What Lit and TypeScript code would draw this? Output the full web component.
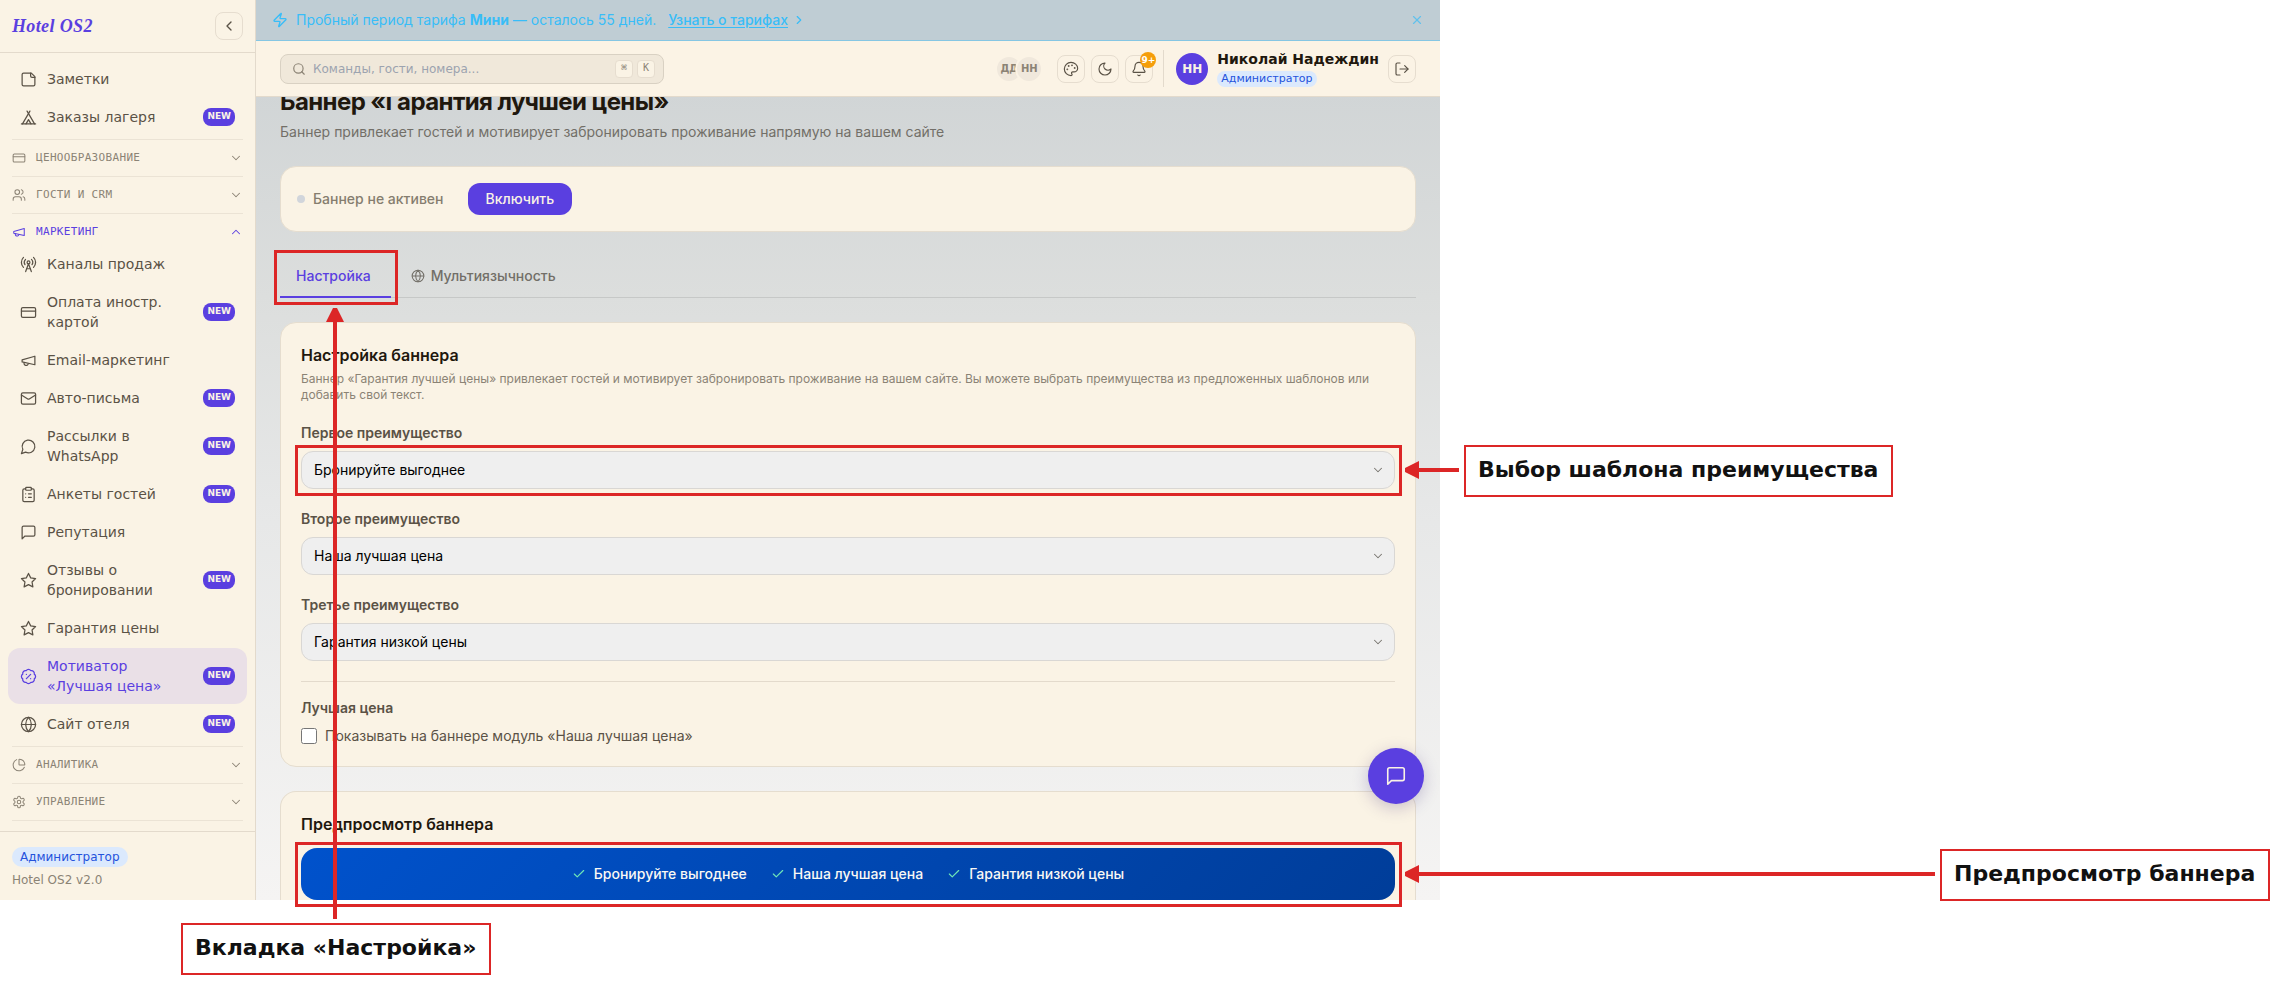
import { LitElement, html, css, svg, nothing } from "lit";
import { customElement, property } from "lit/decorators.js";
import { classMap } from "lit/directives/class-map.js";

const ICONS: Record<string, unknown> = {
  note: svg`<path d="M16 3H5a2 2 0 0 0-2 2v14a2 2 0 0 0 2 2h14a2 2 0 0 0 2-2V8Z"/><path d="M15 3v4a2 2 0 0 0 2 2h4"/>`,
  tent: svg`<path d="M3.5 21 14 3"/><path d="M20.5 21 10 3"/><path d="M15.5 21 12 15l-3.5 6"/><path d="M2 21h20"/>`,
  card: svg`<rect width="20" height="14" x="2" y="5" rx="2"/><path d="M2 10h20"/>`,
  users: svg`<path d="M16 21v-2a4 4 0 0 0-4-4H6a4 4 0 0 0-4 4v2"/><circle cx="9" cy="7" r="4"/><path d="M22 21v-2a4 4 0 0 0-3-3.87"/><path d="M16 3.13a4 4 0 0 1 0 7.75"/>`,
  megaphone: svg`<path d="m3 11 18-5v12L3 14v-3z"/><path d="M11.6 16.8a3 3 0 1 1-5.8-1.6"/>`,
  tower: svg`<path d="M4.9 16.1C1 12.2 1 5.8 4.9 1.9"/><path d="M7.8 4.7a6.14 6.14 0 0 0-.8 7.5"/><circle cx="12" cy="9" r="2"/><path d="M16.2 4.8c2 2 2.26 5.11.8 7.47"/><path d="M19.1 1.9a9.96 9.96 0 0 1 0 14.1"/><path d="M9.5 18h5"/><path d="m8 22 4-11 4 11"/>`,
  mail: svg`<rect width="20" height="16" x="2" y="4" rx="2"/><path d="m22 7-8.97 5.7a1.94 1.94 0 0 1-2.06 0L2 7"/>`,
  bubble: svg`<path d="M7.9 20A9 9 0 1 0 4 16.1L2 22Z"/>`,
  clipboard: svg`<rect width="8" height="4" x="8" y="2" rx="1"/><path d="M16 4h2a2 2 0 0 1 2 2v14a2 2 0 0 1-2 2H6a2 2 0 0 1-2-2V6a2 2 0 0 1 2-2h2"/><path d="M12 11h4"/><path d="M12 16h4"/><path d="M8 11h.01"/><path d="M8 16h.01"/>`,
  message: svg`<path d="M21 15a2 2 0 0 1-2 2H7l-4 4V5a2 2 0 0 1 2-2h14a2 2 0 0 1 2 2z"/>`,
  star: svg`<path d="M12 2l3.09 6.26L22 9.27l-5 4.87 1.18 6.88L12 17.77l-6.18 3.25L7 14.14 2 9.27l6.91-1.01L12 2z"/>`,
  percent: svg`<path d="M3.85 8.62a4 4 0 0 1 4.78-4.77 4 4 0 0 1 6.74 0 4 4 0 0 1 4.78 4.78 4 4 0 0 1 0 6.74 4 4 0 0 1-4.77 4.78 4 4 0 0 1-6.75 0 4 4 0 0 1-4.78-4.77 4 4 0 0 1 0-6.76Z"/><path d="m15 9-6 6"/><path d="M9 9h.01"/><path d="M15 15h.01"/>`,
  globe: svg`<circle cx="12" cy="12" r="10"/><path d="M12 2a14.5 14.5 0 0 0 0 20 14.5 14.5 0 0 0 0-20"/><path d="M2 12h20"/>`,
  pie: svg`<path d="M21 12c.552 0 1.005-.449.95-.998a10 10 0 0 0-8.953-8.951c-.55-.055-.998.398-.998.95v8a1 1 0 0 0 1 1z"/><path d="M21.21 15.89A10 10 0 1 1 8 2.83"/>`,
  gear: svg`<path d="M12.22 2h-.44a2 2 0 0 0-2 2v.18a2 2 0 0 1-1 1.73l-.43.25a2 2 0 0 1-2 0l-.15-.08a2 2 0 0 0-2.73.73l-.22.38a2 2 0 0 0 .73 2.73l.15.1a2 2 0 0 1 1 1.72v.51a2 2 0 0 1-1 1.74l-.15.09a2 2 0 0 0-.73 2.73l.22.38a2 2 0 0 0 2.73.73l.15-.08a2 2 0 0 1 2 0l.43.25a2 2 0 0 1 1 1.73V20a2 2 0 0 0 2 2h.44a2 2 0 0 0 2-2v-.18a2 2 0 0 1 1-1.73l.43-.25a2 2 0 0 1 2 0l.15.08a2 2 0 0 0 2.73-.73l.22-.39a2 2 0 0 0-.73-2.73l-.15-.08a2 2 0 0 1-1-1.74v-.5a2 2 0 0 1 1-1.74l.15-.09a2 2 0 0 0 .73-2.73l-.22-.38a2 2 0 0 0-2.73-.73l-.15.08a2 2 0 0 1-2 0l-.43-.25a2 2 0 0 1-1-1.73V4a2 2 0 0 0-2-2z"/><circle cx="12" cy="12" r="3"/>`,
  zap: svg`<path d="M4 14a1 1 0 0 1-.78-1.63l9.9-10.2a.5.5 0 0 1 .86.46l-1.92 6.02A1 1 0 0 0 13 10h7a1 1 0 0 1 .78 1.63l-9.9 10.2a.5.5 0 0 1-.86-.46l1.92-6.02A1 1 0 0 0 11 14z"/>`,
  search: svg`<circle cx="11" cy="11" r="8"/><path d="m21 21-4.3-4.3"/>`,
  palette: svg`<circle cx="13.5" cy="6.5" r=".5" fill="currentColor"/><circle cx="17.5" cy="10.5" r=".5" fill="currentColor"/><circle cx="8.5" cy="7.5" r=".5" fill="currentColor"/><circle cx="6.5" cy="12.5" r=".5" fill="currentColor"/><path d="M12 2C6.5 2 2 6.5 2 12s4.5 10 10 10c.926 0 1.648-.746 1.648-1.688 0-.437-.18-.835-.437-1.125-.29-.289-.438-.652-.438-1.125a1.64 1.64 0 0 1 1.668-1.668h1.996c3.051 0 5.555-2.503 5.555-5.554C21.965 6.012 17.461 2 12 2z"/>`,
  moon: svg`<path d="M12 3a6 6 0 0 0 9 9 9 9 0 1 1-9-9Z"/>`,
  bell: svg`<path d="M10.268 21a2 2 0 0 0 3.464 0"/><path d="M3.262 15.326A1 1 0 0 0 4 17h16a1 1 0 0 0 .74-1.673C19.41 13.956 18 12.499 18 8A6 6 0 0 0 6 8c0 4.499-1.411 5.956-2.738 7.326"/>`,
  logout: svg`<path d="M9 21H5a2 2 0 0 1-2-2V5a2 2 0 0 1 2-2h4"/><path d="m16 17 5-5-5-5"/><path d="M21 12H9"/>`,
  left: svg`<path d="m15 18-6-6 6-6"/>`,
  right: svg`<path d="m9 18 6-6-6-6"/>`,
  down: svg`<path d="m6 9 6 6 6-6"/>`,
  up: svg`<path d="m18 15-6-6-6 6"/>`,
  close: svg`<path d="M18 6 6 18"/><path d="m6 6 12 12"/>`,
  check: svg`<path d="M20 6 9 17l-5-5"/>`,
};

const icon = (name: string, size = 16, stroke = 1.75) => html`<svg
  width=${size}
  height=${size}
  viewBox="0 0 24 24"
  fill="none"
  stroke="currentColor"
  stroke-width=${stroke}
  stroke-linecap="round"
  stroke-linejoin="round"
  aria-hidden="true"
>${ICONS[name]}</svg>`;

const base = css`
  * { box-sizing: border-box; }
  svg { display: block; flex: none; }
  button, input, select { font: inherit; color: inherit; margin: 0; }
  button { cursor: pointer; padding: 0; }
  a { color: inherit; text-decoration: none; }
  .square {
    display: grid; place-items: center; flex: none;
    width: 28px; height: 28px; border: 1px solid #e6ddcf; border-radius: 8px;
    background: none; color: #5a5246; position: relative;
  }
  .role {
    display: inline-block; background: #dbe9fd; color: #2453dc; border-radius: 10px;
  }
`;

interface Item { icon: string; text: string; fresh?: boolean; active?: boolean; }
interface Section { icon: string; text: string; open?: boolean; items?: Item[]; }

const TOP: Item[] = [
  { icon: "note", text: "Заметки" },
  { icon: "tent", text: "Заказы лагеря", fresh: true },
];

const SECTIONS: Section[] = [
  { icon: "card", text: "Ценообразование" },
  { icon: "users", text: "Гости и CRM" },
  {
    icon: "megaphone", text: "Маркетинг", open: true,
    items: [
      { icon: "tower", text: "Каналы продаж" },
      { icon: "card", text: "Оплата иностр. картой", fresh: true },
      { icon: "megaphone", text: "Email-маркетинг" },
      { icon: "mail", text: "Авто-письма", fresh: true },
      { icon: "bubble", text: "Рассылки в WhatsApp", fresh: true },
      { icon: "clipboard", text: "Анкеты гостей", fresh: true },
      { icon: "message", text: "Репутация" },
      { icon: "star", text: "Отзывы о бронировании", fresh: true },
      { icon: "star", text: "Гарантия цены" },
      { icon: "percent", text: "Мотиватор «Лучшая цена»", fresh: true, active: true },
      { icon: "globe", text: "Сайт отеля", fresh: true },
    ],
  },
  { icon: "pie", text: "Аналитика" },
  { icon: "gear", text: "Управление" },
];

@customElement("side-bar")
class SideBar extends LitElement {
  static styles = [base, css`
    :host {
      display: flex; flex-direction: column; background: #faf3e5;
      border-right: 1px solid #e3dacc; font-family: "DejaVu Sans", sans-serif; color: #5a5246;
    }
    .brand {
      display: flex; align-items: center; justify-content: space-between;
      height: 53px; padding: 0 12px; border-bottom: 1px solid #e3dacc;
    }
    .logo {
      font: italic bold 18px/24px "Liberation Serif", serif; letter-spacing: 0.02em; color: #5a3fe0;
    }
    nav { flex: 1; padding: 8px 12px; }
    .items { display: flex; flex-direction: column; gap: 2px; margin: 0 -4px; padding-bottom: 4px; }
    .item {
      display: flex; align-items: center; gap: 10px; padding: 8px 12px; border-radius: 12px;
      font-size: 14px; line-height: 20px;
    }
    .item .label { flex: 1; }
    .item.active { background: #eae0e7; color: #5a3fe0; }
    .new {
      background: #5a3fe0; color: #faf3e5; border-radius: 8px; padding: 0 4px 2px;
      font-weight: bold; font-size: 9px; line-height: 16px;
    }
    .section { border-top: 1px solid #ebe3d5; padding-top: 3px; }
    .section:last-child { border-bottom: 1px solid #ebe3d5; }
    .head {
      display: flex; align-items: center; gap: 10px; width: 100%; height: 30px; margin-bottom: 3px;
      background: none; border: 0; text-align: left; color: #8b8375;
      font: 11px/16px "DejaVu Sans Mono", monospace; letter-spacing: 0.03em; text-transform: uppercase;
    }
    .head .label { flex: 1; }
    .head.open { color: #5a3fe0; margin-bottom: -1px; }
    footer {
      border-top: 1px solid #e3dacc; padding: 15px 12px 12px; display: flex; flex-direction: column;
      align-items: flex-start; gap: 5px; font-size: 12px; line-height: 16px; color: #8b8375;
    }
    .role { padding: 2px 8px; }
  `];

  private item(i: Item) {
    return html`<a href="#" class=${classMap({ item: true, active: !!i.active })}>
      ${icon(i.icon, 17)}<span class="label">${i.text}</span>
      ${i.fresh ? html`<span class="new">NEW</span>` : nothing}
    </a>`;
  }

  render() {
    return html`
      <div class="brand">
        <span class="logo">Hotel OS2</span>
        <button class="square" aria-label="Свернуть меню">${icon("left", 16, 2)}</button>
      </div>
      <nav>
        <div class="items">${TOP.map((i) => this.item(i))}</div>
        ${SECTIONS.map((s) => html`<div class="section">
          <button class=${classMap({ head: true, open: !!s.open })} aria-expanded=${s.open ? "true" : "false"}>
            ${icon(s.icon, 14)}<span class="label">${s.text}</span>${icon(s.open ? "up" : "down", 14)}
          </button>
          ${s.items ? html`<div class="items">${s.items.map((i) => this.item(i))}</div>` : nothing}
        </div>`)}
      </nav>
      <footer><span class="role">Администратор</span><span>Hotel OS2 v2.0</span></footer>
    `;
  }
}

@customElement("top-bar")
class TopBar extends LitElement {
  static styles = [base, css`
    :host { display: block; position: relative; z-index: 2; }
    .trial {
      display: flex; align-items: center; height: 41px; padding: 0 16px; gap: 8px;
      background: #bfcdd4; border-bottom: 1px solid #85c6e3; color: #38bdf8;
      font: 14px/20px Inter, sans-serif;
    }
    .trial a {
      display: flex; align-items: center; gap: 4px; margin-left: 4px;
      font-weight: 500; text-decoration: underline; text-underline-offset: 2px;
    }
    .close { margin-left: auto; background: none; border: 0; opacity: 0.7; }
    .bar {
      display: flex; align-items: center; gap: 6px; height: 56px; padding: 0 24px;
      background: #fbf3e5; border-bottom: 1px solid #e3dacc; font-family: "DejaVu Sans", sans-serif;
    }
    .search {
      display: flex; align-items: center; gap: 7px; width: 384px; height: 30px; padding: 0 8px 0 11px;
      background: #f0e8da; border: 1px solid #d9d1c3; border-radius: 8px; color: #8b8375;
      margin-right: auto;
    }
    .search input {
      flex: 1; min-width: 0; border: 0; background: none; padding: 0; outline: 0;
      font-size: 12px; line-height: 20px;
    }
    .search input::placeholder { color: #9ca3af; }
    .keys { display: flex; gap: 4px; }
    kbd {
      width: 18px; height: 18px; border: 1px solid #e6ddcf; border-radius: 4px; background: #faf3e5;
      font: 10px/14px "DejaVu Sans Mono", monospace; text-align: center;
    }
    .team { display: flex; margin-right: 8px; }
    .mate {
      width: 28px; height: 28px; border: 2px solid #fbf3e5; border-radius: 50%; background: #f0e8dc;
      font-weight: bold; font-size: 10px; line-height: 24px; text-align: center; color: #8b8375;
    }
    .mate + .mate { margin-left: -8px; }
    .count {
      position: absolute; top: -4px; right: -4px; width: 16px; height: 16px; border-radius: 50%;
      background: #f59e0b; color: #fff; font-weight: bold; font-size: 9px; line-height: 16px; text-align: center;
    }
    .user {
      display: flex; align-items: center; gap: 9px; margin-left: 4px; padding-left: 12px;
      border-left: 1px solid #e3dacc;
    }
    .avatar {
      width: 32px; height: 32px; border-radius: 50%; background: #5a3fe0; color: #faf3e5;
      font-weight: bold; font-size: 12px; line-height: 32px; text-align: center;
    }
    .who { display: flex; flex-direction: column; align-items: flex-start; gap: 3px; }
    .name { font-weight: bold; font-size: 14px; line-height: 18px; color: #1f180e; }
    .role { padding: 0 4px; font-size: 11px; line-height: 16px; }
  `];

  render() {
    return html`
      <div class="trial">
        ${icon("zap", 16, 2)}
        <span>Пробный период тарифа <b>Мини</b> — осталось 55 дней.</span>
        <a href="#">Узнать о тарифах ${icon("right", 14, 2)}</a>
        <button class="close" aria-label="Закрыть">${icon("close", 14, 2)}</button>
      </div>
      <div class="bar">
        <label class="search">
          ${icon("search", 14, 2)}
          <input type="text" placeholder="Команды, гости, номера..." aria-label="Поиск" />
          <span class="keys"><kbd>⌘</kbd><kbd>K</kbd></span>
        </label>
        <div class="team"><span class="mate">ДД</span><span class="mate">НН</span></div>
        <button class="square" aria-label="Тема оформления">${icon("palette")}</button>
        <button class="square" aria-label="Тёмный режим">${icon("moon")}</button>
        <button class="square" aria-label="Уведомления">${icon("bell")}<span class="count">9+</span></button>
        <div class="user">
          <span class="avatar">НН</span>
          <div class="who"><span class="name">Николай Надеждин</span><span class="role">Администратор</span></div>
          <button class="square" aria-label="Выйти">${icon("logout")}</button>
        </div>
      </div>
    `;
  }
}

const PERKS = ["Бронируйте выгоднее", "Наша лучшая цена", "Гарантия низкой цены"];
const FIELDS = ["Первое преимущество", "Второе преимущество", "Третье преимущество"];

@customElement("banner-settings")
class BannerSettings extends LitElement {
  static styles = [base, css`
    :host {
      display: flex; flex-direction: column; gap: 24px; margin-top: -35px; padding: 24px 24px 0;
      font: 14px/20px Inter, sans-serif; color: #5a5246;
    }
    h1, h2, p { margin: 0; }
    h1 { font-size: 24px; line-height: 32px; font-weight: 700; letter-spacing: -0.025em; color: #1f180e; }
    h2 { font-size: 16px; line-height: 24px; font-weight: 600; color: #1f180e; }
    .title p { margin-top: 4px; color: #726f68; }
    .card { background: #faf3e5; border: 1px solid #e5ddcf; border-radius: 16px; padding: 20px; }
    .status { display: flex; align-items: center; gap: 8px; padding: 16px; font-weight: 500; color: #857d6f; }
    .dot { width: 8px; height: 8px; border-radius: 50%; background: #d1d5db; }
    .primary {
      height: 32px; padding: 0 18px; margin-left: 16px; border: 0; border-radius: 12px;
      background: #5a3fe0; color: #faf3e5; font-weight: 500;
    }
    .tabs { display: flex; gap: 4px; box-shadow: inset 0 -1px #c6c8c7; }
    .tab {
      display: flex; align-items: center; gap: 6px; padding: 10px 20px 10px 16px; border: 0;
      border-bottom: 2px solid transparent; background: none; font-weight: 500; color: #726f68;
    }
    .tab.on { color: #5a3fe0; border-color: #5a3fe0; }
    .hint { margin-top: 4px; font-size: 12px; line-height: 16px; color: #8b8375; }
    .field { display: flex; flex-direction: column; gap: 8px; margin-top: 20px; }
    .caption { font-weight: 600; }
    .pick { display: grid; align-items: center; }
    .pick > * { grid-area: 1 / 1; }
    .pick svg { justify-self: end; margin-right: 10px; pointer-events: none; color: #77746e; }
    select {
      appearance: none; width: 100%; height: 38px; padding: 0 12px; border: 1px solid #d9d7d4;
      border-radius: 12px; background: #efefef; color: #000;
    }
    .best { border-top: 1px solid #e3dacc; padding-top: 16px; }
    .tick { display: flex; align-items: center; gap: 8px; }
    .tick input { width: 16px; height: 16px; }
    .preview { border-bottom: 0; border-radius: 16px 16px 0 0; padding-bottom: 0; }
    .banner {
      display: flex; justify-content: center; gap: 24px; margin-top: 12px; padding: 16px;
      border-radius: 16px; background: linear-gradient(135deg, #0052cc, #003d99);
      color: #faf8f4; font-weight: 500;
    }
    .perk { display: flex; align-items: center; gap: 8px; }
    .perk svg { color: #6ee7b7; }
  `];

  render() {
    return html`
      <div class="title">
        <h1>Баннер «Гарантия лучшей цены»</h1>
        <p>Баннер привлекает гостей и мотивирует забронировать проживание напрямую на вашем сайте</p>
      </div>
      <div class="card status">
        <span class="dot"></span><span>Баннер не активен</span><button class="primary">Включить</button>
      </div>
      <div class="tabs" role="tablist">
        <button class="tab on" role="tab" aria-selected="true">Настройка</button>
        <button class="tab" role="tab" aria-selected="false">${icon("globe", 14)}Мультиязычность</button>
      </div>
      <section class="card">
        <h2>Настройка баннера</h2>
        <p class="hint">Баннер «Гарантия лучшей цены» привлекает гостей и мотивирует забронировать проживание на вашем сайте. Вы можете выбрать преимущества из предложенных шаблонов или добавить свой текст.</p>
        ${FIELDS.map((f, n) => html`<div class="field">
          <label class="caption" for="perk-${n}">${f}</label>
          <div class="pick">
            <select id="perk-${n}">${PERKS.map((p, k) => html`<option ?selected=${k === n}>${p}</option>`)}</select>
            ${icon("down", 14)}
          </div>
        </div>`)}
        <div class="field best">
          <span class="caption">Лучшая цена</span>
          <label class="tick"><input type="checkbox" />Показывать на баннере модуль «Наша лучшая цена»</label>
        </div>
      </section>
      <section class="card preview">
        <h2>Предпросмотр баннера</h2>
        <div class="banner">${PERKS.map((p) => html`<span class="perk">${icon("check", 14, 2)}${p}</span>`)}</div>
      </section>
    `;
  }
}

@customElement("note-arrow")
class NoteArrow extends LitElement {
  @property({ reflect: true }) dir = "left";

  static styles = css`
    :host { display: flex; align-items: center; }
    :host([dir="up"]) { flex-direction: column; }
    .line { flex: 1; background: #dc2626; }
    :host([dir="left"]) .line { height: 4px; }
    :host([dir="up"]) .line { width: 4px; }
    svg { display: block; fill: #dc2626; }
  `;

  render() {
    return this.dir === "up"
      ? html`<svg width="18" height="14"><path d="M7 0h4l7 14H0z" /></svg><span class="line"></span>`
      : html`<svg width="14" height="18"><path d="M0 7v4l14 7V0z" /></svg><span class="line"></span>`;
  }
}

@customElement("app-root")
class AppRoot extends LitElement {
  static styles = [base, css`
    :host { display: block; position: relative; min-height: 100vh; background: #fff; }
    .stage { display: grid; grid-template-columns: 1440fr 853fr; }
    .app {
      position: relative; display: grid; grid-template-columns: 256px minmax(0, 1fr);
      background: linear-gradient(#ccd1d3, #dcdedd 33%, #e7e8e8 58%, #f5f4f3);
    }
    .chat {
      position: absolute; right: 16px; bottom: 96px; z-index: 3; width: 56px; height: 56px;
      display: grid; place-items: center; border: 0; border-radius: 50%; background: #5a3fe0; color: #faf3e5;
      box-shadow: 0 4px 16px rgba(60, 40, 120, 0.25);
    }
    .notes { position: absolute; inset: 0; z-index: 4; pointer-events: none; }
    .notes > * { position: absolute; }
    .frame { border: 3px solid #dc2626; }
    .callout {
      border: 2px solid #dc2626; background: #fff; padding: 10px 13px 12px 12px; color: #111; white-space: nowrap;
      font: bold 22px/26px "DejaVu Sans", sans-serif;
    }
    .frame-tab { left: 274px; top: 250px; width: 124px; height: 55px; }
    .frame-select { left: 295px; top: 445px; width: 1107px; height: 51px; }
    .frame-preview { left: 295px; top: 842px; width: 1107px; height: 65px; }
    .arrow-tab { left: 326px; top: 308px; width: 18px; height: 611px; }
    .arrow-select { left: 1405px; top: 461px; width: 54px; height: 18px; }
    .arrow-preview { left: 1405px; top: 865px; width: 530px; height: 18px; }
    .text-tab { left: 181px; top: 923px; }
    .text-select { left: 1464px; top: 445px; }
    .text-preview { left: 1940px; top: 849px; }
  `];

  render() {
    return html`
      <div class="stage">
        <div class="app">
          <side-bar></side-bar>
          <main><top-bar></top-bar><banner-settings></banner-settings></main>
          <button class="chat" aria-label="Чат">${icon("message", 22)}</button>
        </div>
      </div>
      <div class="notes">
        <span class="frame frame-tab"></span>
        <span class="frame frame-select"></span>
        <span class="frame frame-preview"></span>
        <note-arrow class="arrow-tab" dir="up"></note-arrow>
        <note-arrow class="arrow-select" dir="left"></note-arrow>
        <note-arrow class="arrow-preview" dir="left"></note-arrow>
        <span class="callout text-tab">Вкладка «Настройка»</span>
        <span class="callout text-select">Выбор шаблона преимущества</span>
        <span class="callout text-preview">Предпросмотр баннера</span>
      </div>
    `;
  }
}
